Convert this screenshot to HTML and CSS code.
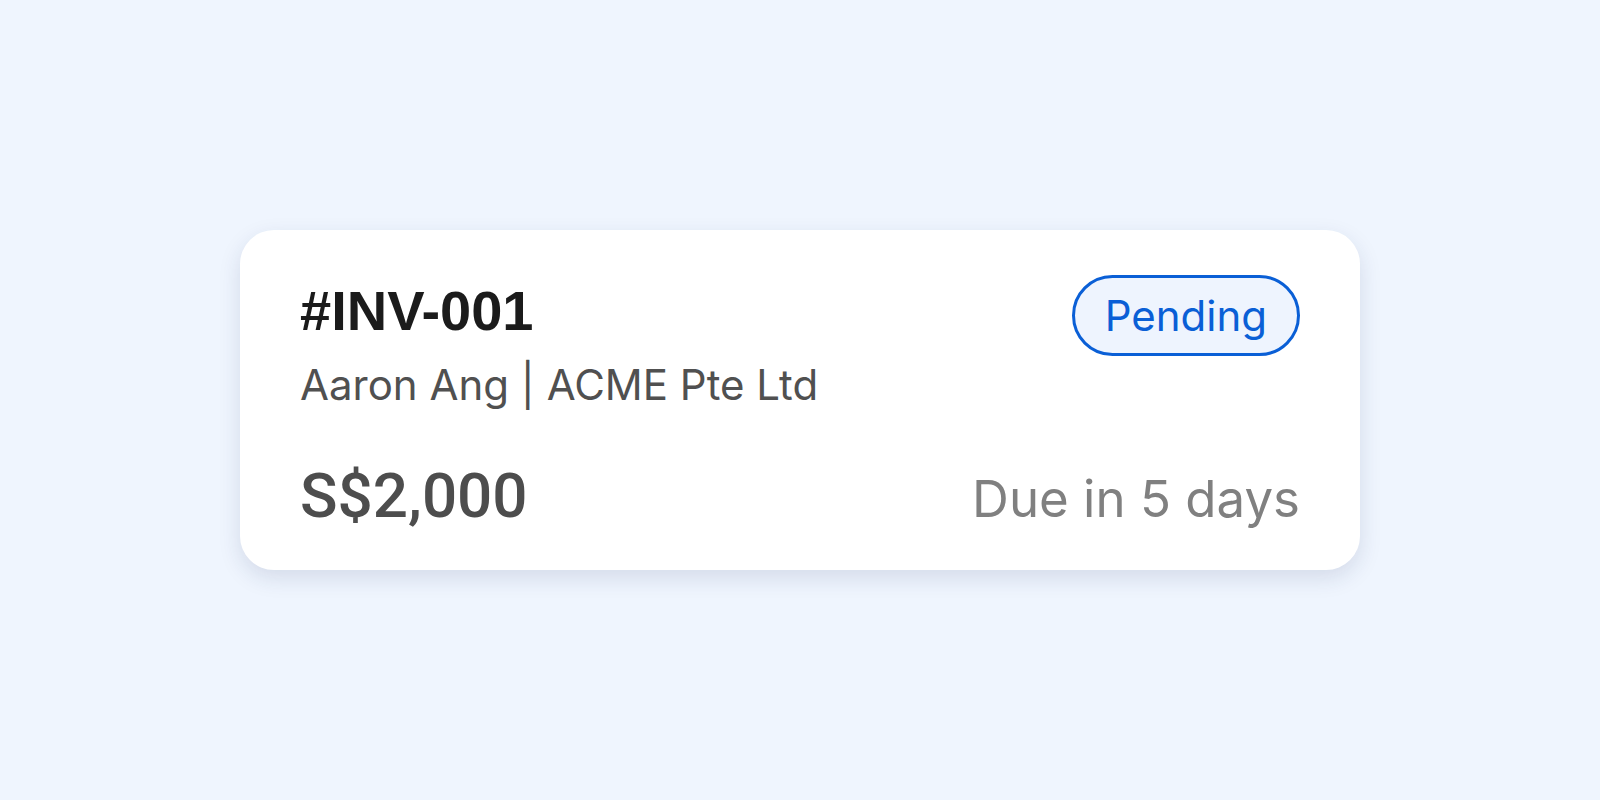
FILE: index.html
```html
<!DOCTYPE html>
<html lang="en">
<head>
    <meta charset="UTF-8">
    <meta name="viewport" content="width=device-width, initial-scale=1.0">
    <title>Invoice Card</title>
    <link rel="stylesheet" href="styles.css">
</head>
<body>
    <div class="page">
        <div class="card">
            <div class="top">
                <div class="info">
                    <h1 class="number">#INV-001</h1>
                    <p class="client">Aaron Ang | ACME Pte Ltd</p>
                </div>
                <span class="status">Pending</span>
            </div>
            <div class="bottom">
                <span class="amount">S$2,000</span>
                <span class="due">Due in 5 days</span>
            </div>
        </div>
    </div>
</body>
</html>
```

FILE: styles.css
```css
body{
    margin:0;
    padding:0;
    background-color: #eff5fe;
    font-family: "Inter", "Liberation Sans", sans-serif;
}

.page{
    height:100vh;
    display:flex;
    align-items:center;
    justify-content:center;
}

.card{
    width:1120px;
    height:340px;
    box-sizing:border-box;
    padding:48px 60px 43px 60px;
    background-color:white;
    border-radius:34px;
    box-shadow:0 8px 22px rgba(30, 50, 90, 0.13);
    display:flex;
    flex-direction:column;
    justify-content:space-between;
}

.top{
    display:flex;
    justify-content:space-between;
    align-items:flex-start;
}

.number{
    margin:0;
    font-family:"Liberation Sans", Arial, sans-serif;
    font-size:56px;
    font-weight:700;
    line-height:66px;
    color:#1b1b1b;
}

.client{
    margin:16px 0 0 0;
    font-size:42px;
    line-height:50px;
    color:#505050;
}

.status{
    margin-top:-3px;
    padding:0 30px;
    height:81px;
    box-sizing:border-box;
    display:flex;
    align-items:center;
    border:3px solid #0a5fd6;
    border-radius:41px;
    background-color:#eef4fe;
    color:#0a5fd6;
    font-size:42px;
}

.bottom{
    display:flex;
    justify-content:space-between;
    align-items:baseline;
}

.amount{
    font-family:"Roboto", "Liberation Sans", sans-serif;
    font-size:62px;
    font-weight:500;
    line-height:1;
    color:#4d4d4d;
}

.due{
    font-size:51px;
    line-height:1;
    color:#808080;
}
```
